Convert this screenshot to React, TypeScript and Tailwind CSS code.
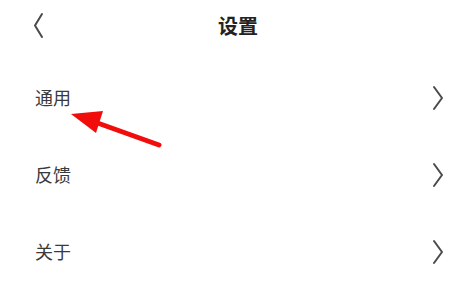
import React from "react";

const Chevron = () => (
  <svg width="12" height="26" viewBox="0 0 12 26" className="block">
    <polyline points="2,2 10,13 2,24" fill="none" stroke="#4a4a4a" strokeWidth="2" strokeLinecap="round" strokeLinejoin="round" />
  </svg>
);

const Row = ({ label }: { label: string }) => (
  <div className="flex h-[77px] items-center justify-between pl-[35px] pr-[21px]">
    <span className="text-[18px] text-[#3a3a3a]">{label}</span>
    <Chevron />
  </div>
);

export default function App() {
  return (
    <div
      className="relative h-[290px] w-[465px] overflow-hidden bg-white"
      style={{ fontFamily: '"Noto Sans CJK SC", "Noto Sans", sans-serif' }}
    >
      <div className="relative flex h-[52px] items-center justify-center">
        <div className="absolute left-[32px] top-[12px]">
          <svg width="12" height="27" viewBox="0 0 12 27" className="block">
            <polyline points="10,2 3,13.5 10,25" fill="none" stroke="#4a4a4a" strokeWidth="2" strokeLinecap="round" strokeLinejoin="round" />
          </svg>
        </div>
        <span className="ml-[11px] text-[20px] font-bold text-[#222]">设置</span>
      </div>
      <div className="pt-[7px]">
        <Row label="通用" />
        <Row label="反馈" />
        <Row label="关于" />
      </div>
      <svg className="pointer-events-none absolute left-0 top-0" width="465" height="290">
        <line x1="92" y1="121" x2="159" y2="145" stroke="#f20d0d" strokeWidth="5" strokeLinecap="round" />
        <polygon points="71,114 103,111 96,133" fill="#f20d0d" />
      </svg>
    </div>
  );
}
